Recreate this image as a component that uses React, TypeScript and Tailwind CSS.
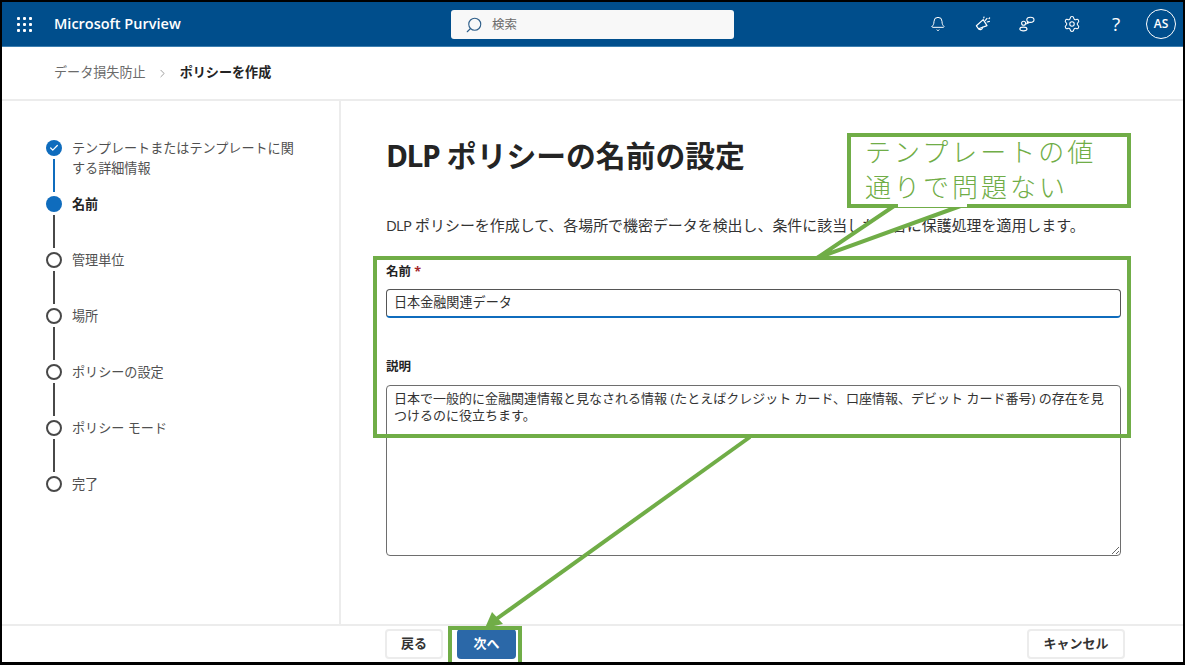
import { Bell, Check, ChevronRight, Search, Settings } from 'lucide-react';

const font = { fontFamily: '"Open Sans", "Noto Sans CJK JP", sans-serif' };

const steps = [
  { label: 'テンプレートまたはテンプレートに関する詳細情報', state: 'done' },
  { label: '名前', state: 'current' },
  { label: '管理単位', state: 'todo' },
  { label: '場所', state: 'todo' },
  { label: 'ポリシーの設定', state: 'todo' },
  { label: 'ポリシー モード', state: 'todo' },
  { label: '完了', state: 'todo' },
];

function Waffle() {
  return (
    <div className="grid grid-cols-3 gap-[3px] w-[15px]">
      {[0, 1, 2, 3, 4, 5, 6, 7, 8].map((i) => (
        <div key={i} className="w-[3px] h-[3px] bg-white rounded-[1px]" />
      ))}
    </div>
  );
}

function PeopleIcon() {
  return (
    <svg width="16" height="16" viewBox="0 0 16 16" fill="none" stroke="white" strokeWidth="1.1">
      <circle cx="4.6" cy="7.2" r="2" />
      <ellipse cx="4.4" cy="13" rx="3.6" ry="1.9" />
      <ellipse cx="11.4" cy="3.8" rx="3.6" ry="2.6" />
      <path d="M8.8 5.6 L7.8 7.6 L10.4 6.4" />
    </svg>
  );
}

function PopperIcon() {
  return (
    <svg width="17" height="17" viewBox="0 0 17 17" fill="none" stroke="white" strokeWidth="1.2" strokeLinejoin="round" strokeLinecap="round">
      <path d="M9.2 3.6 L13 9.6 L4.6 12.8 L2.4 9.8 Z" />
      <path d="M4.8 12.8 A2 2 0 0 0 8.4 11.4" />
      <path d="M11.4 4.4 L13 2.4 M13.2 6 L15.4 5.4 M9.8 1.8 L10 1 M15 2.6 L15.6 2" />
    </svg>
  );
}

function Step({ label, state, last }: { label: string; state: string; last: boolean }) {
  return (
    <div className="flex h-[56px] shrink-0">
      <div className="flex flex-col items-center w-[16px] shrink-0">
        {state === 'done' && (
          <div className="w-[16px] h-[16px] rounded-full bg-[#0f6cbd] flex items-center justify-center">
            <Check className="w-[10px] h-[10px] text-white" strokeWidth={3} />
          </div>
        )}
        {state === 'current' && <div className="w-[16px] h-[16px] rounded-full bg-[#0f6cbd]" />}
        {state === 'todo' && <div className="w-[16px] h-[16px] rounded-full border-2 border-[#484848]" />}
        {!last && (
          <div className={`w-[2px] h-[33px] mt-[3px] ${state === 'done' ? 'bg-[#0f6cbd]' : 'bg-[#484848]'}`} />
        )}
      </div>
      <div
        className={`ml-[10px] w-[226px] text-[13.1px] leading-[20px] -mt-[2px] ${
          state === 'current' ? 'font-bold text-[#242424]' : 'text-[#505050]'
        }`}
      >
        {label}
      </div>
    </div>
  );
}

export default function App() {
  return (
    <div style={font} className="relative w-[1185px] h-[665px] overflow-hidden bg-white border-2 border-b-[3px] border-black flex flex-col">
      {/* Top bar */}
      <div className="h-[45px] shrink-0 bg-[#004e8c] border-b border-[#3d7fb0] flex items-center text-white">
        <div className="w-[52px] pl-[15px] shrink-0">
          <Waffle />
        </div>
        <div className="w-[397px] shrink-0 text-[14.5px] font-semibold">Microsoft Purview</div>
        <div className="w-[283px] h-[29px] mt-[1px] bg-[#f8f8f8] rounded-[3px] flex items-center pl-[14px] gap-[9px] shrink-0">
          <Search className="w-[18px] h-[18px] text-[#2f5f8a] -scale-x-100" strokeWidth={1.5} />
          <span className="text-[12.5px] leading-[20px] mt-[1px] text-[#6b6b6b]">検索</span>
        </div>
        <div className="flex-1 flex items-center justify-end pr-[7px]">
          <div className="w-[44px] flex justify-center">
            <Bell className="w-[16px] h-[16px]" strokeWidth={1.5} />
          </div>
          <div className="w-[44px] flex justify-center">
            <PopperIcon />
          </div>
          <div className="w-[45px] flex justify-center">
            <PeopleIcon />
          </div>
          <div className="w-[45px] flex justify-center">
            <Settings className="w-[18px] h-[18px]" strokeWidth={1.4} />
          </div>
          <div className="w-[44px] flex justify-center text-[19px] leading-none">?</div>
          <div className="w-[30px] h-[30px] ml-[8px] rounded-full border border-white flex items-center justify-center text-[12px] font-semibold">
            AS
          </div>
        </div>
      </div>

      {/* Breadcrumb */}
      <div className="h-[54px] shrink-0 border-b-2 border-[#ececec] flex items-center pl-[52px] text-[13.1px]">
        <span className="text-[#6b6b6b]">データ損失防止</span>
        <ChevronRight className="w-[13px] h-[13px] mx-[10.5px] text-[#8a8a8a]" strokeWidth={1.5} />
        <span className="font-bold text-[#242424]">ポリシーを作成</span>
      </div>

      {/* Body */}
      <div className="flex-1 flex min-h-0">
        <div className="w-[339px] shrink-0 border-r-2 border-[#ececec] pl-[44px] pt-[39px] flex flex-col">
          {steps.map((s, i) => (
            <Step key={s.label} label={s.label} state={s.state} last={i === steps.length - 1} />
          ))}
        </div>
        <div className="flex-1 pl-[45px] pr-[62px] flex flex-col">
          <h1 className="mt-[34px] h-[42px] text-[29.8px] leading-[42px] font-bold text-[#242424]">
            <span className="tracking-[-1.5px]">DLP</span> ポリシーの名前の設定
          </h1>
          <p className="mt-[36px] text-[14.95px] leading-[24px] text-[#333333]">
            <span className="tracking-[-0.8px]">DLP</span> ポリシーを作成して、各場所で機密データを検出し、条件に該当した場合に保護処理を適用します。
          </p>
          <label className="mt-[25px] text-[12.5px] leading-[20px] font-bold text-[#242424]">
            名前 <span className="text-[#a4262c]">*</span>
          </label>
          <input
            readOnly
            defaultValue="日本金融関連データ"
            className="mt-[7px] h-[29px] pl-[7px] pr-[8px] pb-[4px] text-[13.1px] text-[#333333] border border-[#555555] border-b-2 border-b-[#0f6cbd] rounded-[4px] outline-none shrink-0"
          />
          <label className="mt-[39px] text-[12.5px] leading-[20px] font-bold text-[#242424]">説明</label>
          <textarea
            readOnly
            defaultValue="日本で一般的に金融関連情報と見なされる情報 (たとえばクレジット カード、口座情報、デビット カード番号) の存在を見つけるのに役立ちます。"
            className="mt-[8px] h-[171px] pl-[7px] pr-[7px] py-[4px] text-[13px] leading-[17px] text-[#333333] border border-[#6e6e6e] rounded-[4px] outline-none resize shrink-0"
          />
        </div>
      </div>

      {/* Footer */}
      <div className="h-[38px] shrink-0 border-t-2 border-[#ececec] flex items-center pl-[383px] pr-[58px] text-[13px] font-bold text-[#333333]">
        <button className="w-[58px] h-[30px] border-2 border-[#ececec] rounded-[4px] bg-white">戻る</button>
        <button className="ml-[14px] w-[59px] h-[30px] rounded-[4px] bg-[#2b68a8] text-white">次へ</button>
        <button className="ml-auto w-[98px] h-[30px] border-2 border-[#ececec] rounded-[4px] bg-white">キャンセル</button>
      </div>

      {/* Annotations */}
      <svg className="absolute -left-[2px] -top-[2px] pointer-events-none" width="1185" height="665" viewBox="0 0 1185 665" fill="none">
        <polygon points="897,204 966,204 817,258" fill="white" stroke="#70ad47" strokeWidth="4" />
        <rect x="375" y="258" width="754" height="178" stroke="#70ad47" strokeWidth="4" />
        <line x1="750" y1="437" x2="495" y2="620" stroke="#70ad47" strokeWidth="4" />
        <polygon points="485,628 492,612 503,624" fill="#70ad47" />
        <rect x="450" y="628" width="70" height="36" stroke="#70ad47" strokeWidth="4" />
      </svg>
      <div className="absolute left-[845px] top-[131px] w-[284px] h-[75px] bg-white border-4 border-[#70ad47] pl-[14px] text-[26px] leading-[35px] tracking-[3px] text-[#70ad47] font-light">
        <div className="-mt-[2px]">
          テンプレートの値
          <br />
          通りで問題ない
        </div>
      </div>
      <div className="absolute left-[896px] top-[201px] w-[69px] h-[4px] bg-white" />
    </div>
  );
}
